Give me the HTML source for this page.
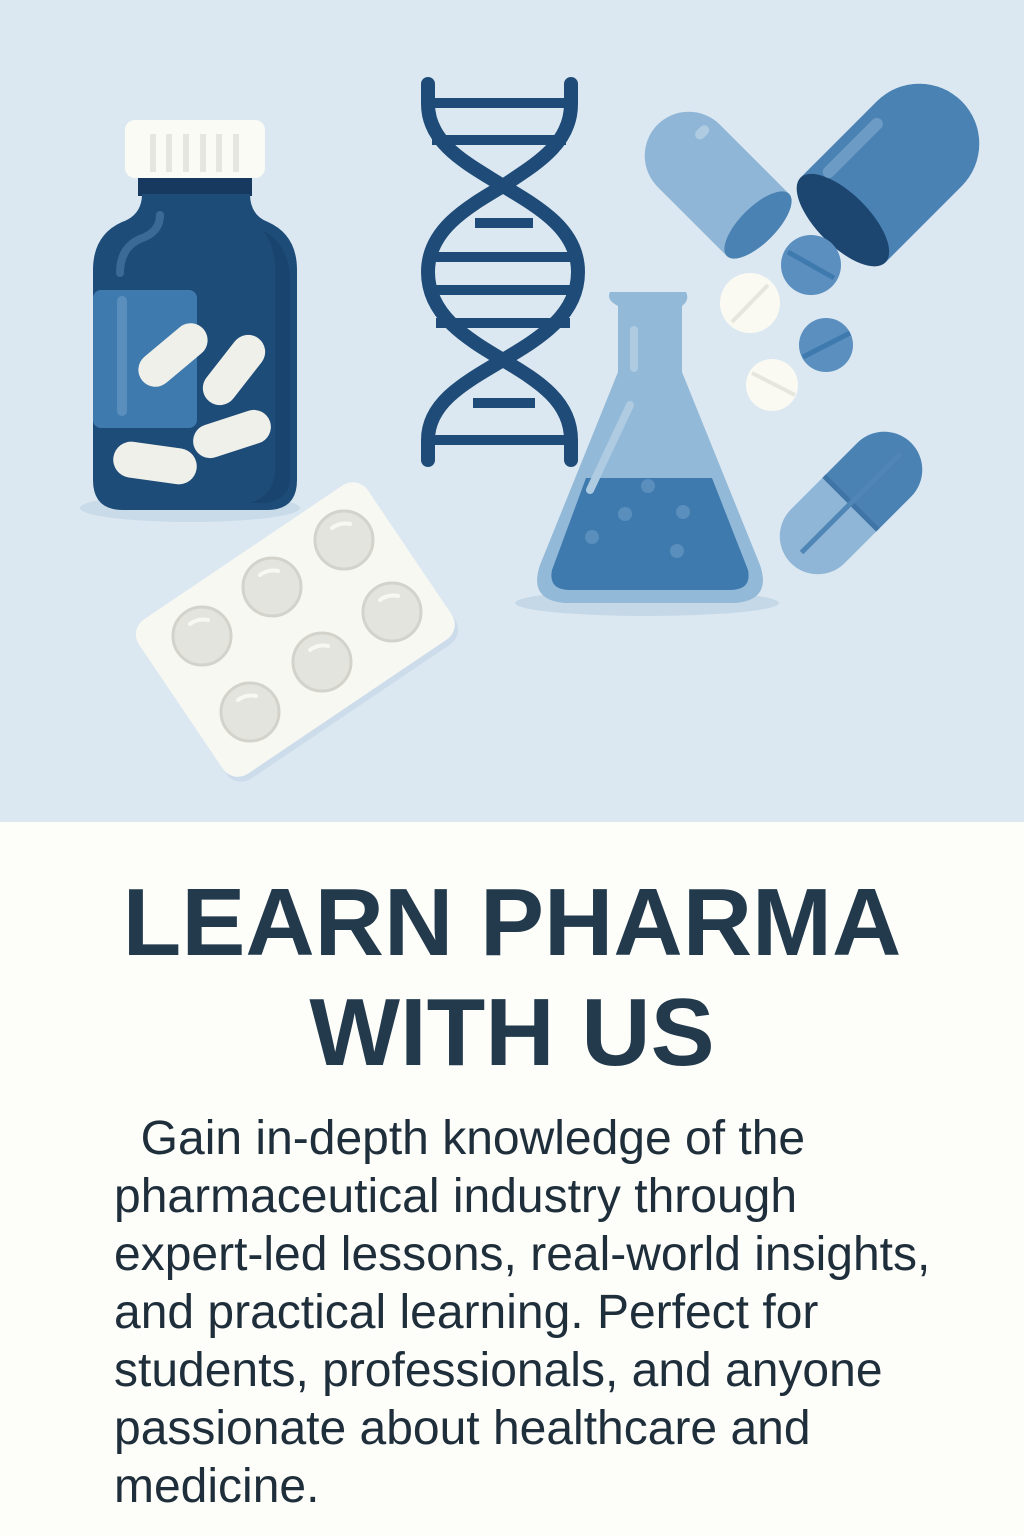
<!DOCTYPE html>
<html><head><meta charset="utf-8"><style>
html,body{margin:0;padding:0;width:1024px;height:1536px;overflow:hidden;background:#fdfdf9}
.top{position:absolute;left:0;top:0;width:1024px;height:822px;background:#dce8f1}
h1{position:absolute;left:0;top:868px;width:1024px;margin:0;text-align:center;font-family:"Liberation Sans",sans-serif;font-weight:bold;font-size:96px;line-height:110px;letter-spacing:0;color:#233a4d}
.p{position:absolute;left:114px;top:1110px;font-family:"Liberation Sans",sans-serif;font-size:48px;line-height:58px;color:#1f2e3b;white-space:nowrap}
</style></head><body>
<div class="top">
<svg width="1024" height="822" viewBox="0 0 1024 822" xmlns="http://www.w3.org/2000/svg">
<ellipse cx="190" cy="508" rx="110" ry="14" fill="#c9dbe8"/>
<rect x="138" y="176" width="114" height="20" fill="#17395f"/>
<path d="M142 194 H250 Q250 215 268 222 Q297 235 297 270 V480 Q297 510 267 510 H123 Q93 510 93 480 V270 Q93 235 122 222 Q142 215 142 194 Z" fill="#1e4c78"/>
<path d="M270 235 Q290 250 290 280 V478 Q290 500 265 503 H250 Q275 495 275 470 V270 Q275 245 262 230Z" fill="#1a4470"/>
<path d="M120 273 Q120 245 145 237 Q160 230 160 215" stroke="#3b6a96" stroke-width="8" fill="none" stroke-linecap="round"/>
<rect x="93" y="290" width="104" height="138" rx="8" fill="#3f7aae"/>
<rect x="117" y="296" width="10" height="120" rx="5" fill="#5a8fbd"/>
<rect x="125" y="120" width="140" height="58" rx="10" fill="#fbfbf5"/>
<g fill="#e6e6e0"><rect x="150" y="134" width="6" height="38"/><rect x="166" y="134" width="6" height="38"/><rect x="183" y="134" width="6" height="38"/><rect x="200" y="134" width="6" height="38"/><rect x="216" y="134" width="6" height="38"/><rect x="233" y="134" width="6" height="38"/></g>
<g fill="#f0f0ea">
<rect x="-40" y="-17" width="80" height="34" rx="17" transform="translate(173,355) rotate(-40)"/>
<rect x="-40" y="-17" width="80" height="34" rx="17" transform="translate(234,370) rotate(-52)"/>
<rect x="-40" y="-17" width="80" height="34" rx="17" transform="translate(232,434) rotate(-18)"/>
<rect x="-42" y="-18" width="84" height="36" rx="18" transform="translate(155,463) rotate(8)"/>
</g>
<g stroke="#1f4b78" stroke-width="14" fill="none" stroke-linecap="round">
<path d="M428 84 V104 C428 145 470 165 503 186 C540 208 578 230 578 272 C578 315 540 338 503 360 C466 382 428 402 428 440 V460"/>
<path d="M571 84 V104 C571 145 534 165 503 186 C466 208 428 230 428 272 C428 315 466 338 503 360 C540 382 571 402 571 440 V460"/>
</g>
<g stroke="#1f4b78" stroke-width="10">
<line x1="428" y1="103" x2="571" y2="103"/><line x1="432" y1="140" x2="566" y2="140"/>
<line x1="475" y1="223" x2="533" y2="223"/><line x1="436" y1="257" x2="570" y2="257"/>
<line x1="432" y1="290" x2="574" y2="290"/><line x1="436" y1="323" x2="570" y2="323"/>
<line x1="473" y1="403" x2="535" y2="403"/><line x1="432" y1="440" x2="566" y2="440"/>
</g>
<ellipse cx="647" cy="603" rx="132" ry="13" fill="#c5d8e7"/>
<path d="M610 292 H686 Q690 300 682 306 V372 L760 565 Q772 600 735 603 H565 Q528 600 540 565 L618 372 V306 Q606 300 610 292Z" fill="#93b9d8"/>
<path d="M586 478 H712 L748 570 Q752 590 730 590 H570 Q548 590 552 570Z" fill="#3f7aae"/>
<g fill="#5a8fbd"><circle cx="648" cy="486" r="7"/><circle cx="625" cy="514" r="7"/><circle cx="683" cy="512" r="7"/><circle cx="592" cy="537" r="7"/><circle cx="677" cy="551" r="7"/></g>
<path d="M630 405 L590 490" stroke="#aecbe2" stroke-width="8" stroke-linecap="round"/>
<path d="M634 330 V368" stroke="#aecbe2" stroke-width="8" stroke-linecap="round"/>
<g transform="translate(717,184) rotate(45)">
<path d="M58 -44 H-40 A44 44 0 0 0 -40 44 H58 Z" fill="#8fb6d6"/>
<ellipse cx="58" cy="0" rx="18" ry="44" fill="#4a82b4"/>
<rect x="-52" y="-34" width="10" height="16" rx="5" fill="#aecbe2"/>
</g>
<g transform="translate(891,172) rotate(135)">
<path d="M68 -60 H-40 A60 60 0 0 0 -40 60 H68 Z" fill="#4a82b4"/>
<ellipse cx="68" cy="0" rx="26" ry="60" fill="#1c4570"/>
<rect x="-30" y="38" width="80" height="12" rx="6" fill="#6c9cc6"/>
</g>
<circle cx="811" cy="265" r="30" fill="#5b8fbf"/><line x1="788" y1="252" x2="834" y2="278" stroke="#3f7aae" stroke-width="5"/>
<circle cx="750" cy="303" r="30" fill="#fbfaf2"/><line x1="732" y1="322" x2="768" y2="285" stroke="#e6e6de" stroke-width="4"/>
<circle cx="826" cy="345" r="27" fill="#5b8fbf"/><line x1="803" y1="357" x2="850" y2="333" stroke="#3f7aae" stroke-width="5"/>
<circle cx="772" cy="385" r="26" fill="#fbfaf2"/><line x1="752" y1="373" x2="795" y2="395" stroke="#e6e6de" stroke-width="4"/>
<g transform="translate(851,503) rotate(-45)">
<rect x="-85" y="-38" width="170" height="76" rx="38" fill="#8fb6d6"/>
<path d="M0 -38 H47 A38 38 0 0 1 47 38 H0Z" fill="#4a82b4"/>
<line x1="0" y1="-38" x2="0" y2="38" stroke="#3f74a6" stroke-width="5"/>
<line x1="-70" y1="0" x2="70" y2="0" stroke="#4f86b6" stroke-width="5"/>
</g>
<g transform="translate(297,632) rotate(-34)">
<rect x="-138" y="-90" width="276" height="186" rx="18" fill="#cddcea"/>
<rect x="-138" y="-96" width="276" height="186" rx="18" fill="#f8f8f3"/>
</g>
<g fill="#e4e4de" stroke="#d3d3cc" stroke-width="3">
<circle cx="344" cy="540" r="29"/><circle cx="272" cy="587" r="29"/><circle cx="202" cy="636" r="29"/>
<circle cx="392" cy="612" r="29"/><circle cx="322" cy="662" r="29"/><circle cx="250" cy="712" r="29"/>
</g>
<g fill="none" stroke="#f8f8f3" stroke-width="4" stroke-linecap="round">
<path d="M332 528 Q340 522 350 524"/><path d="M260 575 Q268 569 278 571"/><path d="M190 624 Q198 618 208 620"/>
<path d="M380 600 Q388 594 398 596"/><path d="M310 650 Q318 644 328 646"/><path d="M238 700 Q246 694 256 696"/>
</g>
</svg>
</div>
<h1>LEARN PHARMA<br>WITH US</h1>
<div class="p">&nbsp;&nbsp;Gain in-depth knowledge of the<br>pharmaceutical industry through<br>expert-led lessons, real-world insights,<br>and practical learning. Perfect for<br>students, professionals, and anyone<br>passionate about healthcare and<br>medicine.</div>
</body></html>
